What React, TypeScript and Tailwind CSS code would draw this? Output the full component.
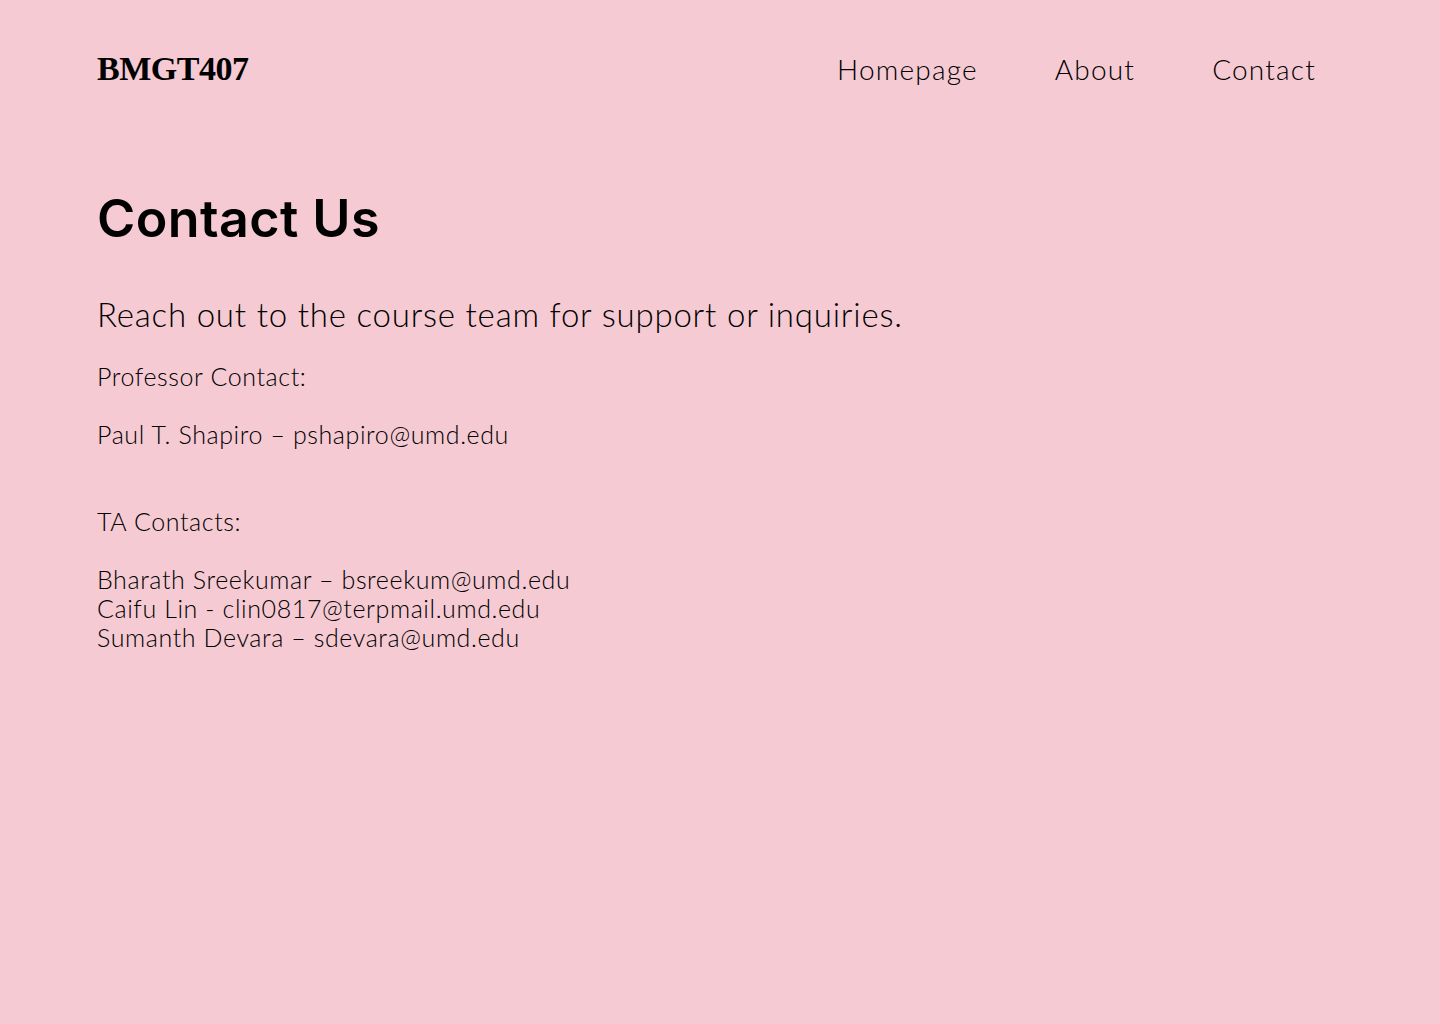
import React from "react";

export default function App() {
  const body = { fontFamily: 'Lato, sans-serif' };
  return (
    <div className="min-h-[1024px] w-full bg-[#f5cad3] text-black">
      <header className="flex items-center justify-between px-[97px] pt-[48px]">
        <div
          className="text-[34px] font-bold leading-none tracking-[-0.5px]"
          style={{ fontFamily: '"Liberation Serif", serif' }}
        >
          BMGT407
        </div>
        <nav className="flex gap-[77px] pr-[27px] text-[28px] font-light tracking-[1.2px]" style={body}>
          <a>Homepage</a>
          <a>About</a>
          <a>Contact</a>
        </nav>
      </header>
      <main className="px-[97px] pt-[103px]">
        <h1
          className="text-[52px] font-semibold leading-none tracking-[0.4px]"
          style={{ fontFamily: 'Inter, sans-serif' }}
        >
          Contact Us
        </h1>
        <p className="mt-[45px] text-[33px] font-light tracking-[0.8px]" style={body}>
          Reach out to the course team for support or inquiries.
        </p>
        <div className="mt-[22px] text-[25px] font-light leading-[29px] tracking-[0.6px]" style={body}>
          <p>Professor Contact:</p>
          <p className="mt-[29px]">Paul T. Shapiro – pshapiro@umd.edu</p>
          <p className="mt-[58px]">TA Contacts:</p>
          <p className="mt-[29px]">Bharath Sreekumar – bsreekum@umd.edu</p>
          <p>Caifu Lin - clin0817@terpmail.umd.edu</p>
          <p>Sumanth Devara – sdevara@umd.edu</p>
        </div>
      </main>
    </div>
  );
}
